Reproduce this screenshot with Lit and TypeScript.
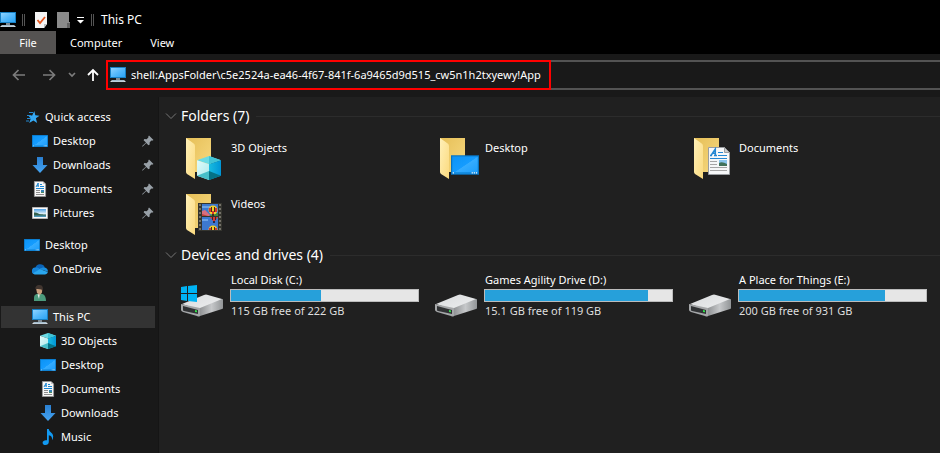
import { LitElement, html, css, nothing, TemplateResult } from "lit";
import { customElement, property } from "lit/decorators.js";
import { classMap } from "lit/directives/class-map.js";

const pc = () => html`<svg width="16" height="16" viewBox="0 0 16 16" aria-hidden="true">
  <defs><linearGradient id="pc" x1="0" y1="0" x2="1" y2="1"><stop offset="0" stop-color="#8fd3ff"/><stop offset=".5" stop-color="#55b9fb"/><stop offset="1" stop-color="#2ba4f5"/></linearGradient></defs>
  <path fill="#1780c4" d="M0 0h16v11H0z"/><path fill="url(#pc)" d="M1 1h14v9H1z"/>
  <path fill="#7f8b94" d="M6 11h4v2H6z"/><path fill="#d5dde3" d="M2 13h12l2 2H0z"/><path fill="#6e99b5" d="M2 13.500h12v.7H2z"/></svg>`;

const desktop = (w = 16, h = 16) => html`<svg width=${w} height=${h} viewBox="0 0 16 16" preserveAspectRatio="none" aria-hidden="true">
  <defs><linearGradient id="dk" x1="0" y1="0" x2="1" y2="1"><stop offset="0" stop-color="#0c93f5"/><stop offset=".5" stop-color="#159cff"/><stop offset=".52" stop-color="#35acff"/><stop offset="1" stop-color="#1b9dfc"/></linearGradient></defs>
  <path fill="#0873c0" d="M0 2h16v12H0z"/><path fill="url(#dk)" d="M.7 2.700h14.600v10.600H.7z"/><path fill="#0d83d6" d="M1 12.500h14v.8H1z"/><path fill="#fff" d="M1 12.500h.7v.8H1zM11.800 12.500h.7v.8h-.7zM13 12.500h.7v.8h-.7zM14.200 12.500h.7v.8h-.7z"/></svg>`;

const downloads = () => html`<svg width="16" height="16" viewBox="0 0 16 16" aria-hidden="true">
  <defs><linearGradient id="dl" x1="0" y1="0" x2="0" y2="1"><stop offset="0" stop-color="#2a7fd0"/><stop offset="1" stop-color="#45a4f2"/></linearGradient></defs>
  <path fill="url(#dl)" d="M5 0h6v8h4.500L8 16 .5 8H5z"/></svg>`;

const doc = () => html`<svg width="16" height="16" viewBox="0 0 16 16" aria-hidden="true">
  <path fill="#f7f7f7" stroke="#999" stroke-width=".8" d="M2.400.4h8.600l2.600 2.600v12.600H2.400z"/><path fill="#c5c5c5" d="M11 .4V3h2.600z"/>
  <path fill="none" stroke="#1b86d2" stroke-width="1" d="M4 6l2.200-4v4M4.800 4.800h1.800M8 3.500h2M8 5.500h4M4 7.500h8"/>
  <path stroke="#8c8c8c" d="M4 9.500h4M4 11.500h4M4 13.500h8"/><path fill="#3583b5" d="M9 9h3v3H9z"/><path fill="#4d8b63" d="M9 11h3v1H9z"/></svg>`;

const pictures = () => html`<svg width="16" height="16" viewBox="0 0 16 16" aria-hidden="true">
  <defs><linearGradient id="pi" x1="0" y1="0" x2="0" y2="1"><stop offset="0" stop-color="#4fa2e6"/><stop offset=".6" stop-color="#e2f1f8"/><stop offset="1" stop-color="#8cc0d8"/></linearGradient></defs>
  <path fill="#fafafa" stroke="#b5b5b5" d="M.5 2.500h15v11H.5z"/><path fill="url(#pi)" d="M2 4h12v8H2z"/><path fill="#35624e" d="M2 7.500c3-.5 4 1.500 7 1.800 2 .2 3 .2 5 .2V11H2z"/><path fill="#4c96b8" d="M2 10.500h12V12H2z"/></svg>`;

const star = () => html`<svg width="16" height="16" viewBox="0 0 16 16" aria-hidden="true">
  <path fill="#35a9f4" d="M10.300 2l1 4.300 4.200.4-3.600 2.500 1.200 4.800-3.700-2.600L5.200 14l1.600-4.500-2.600-3 4 .1z"/>
  <path stroke="#2389d2" d="M5 3.500h4M3 6.500h4M3 9.500h4M2 12h3"/></svg>`;

const cloud = () => html`<svg width="16" height="16" viewBox="0 0 16 16" aria-hidden="true">
  <path fill="#0b64b8" d="M3.300 7A5 5 0 0 1 12.800 6.500L7 11z"/><path fill="#1684d8" d="M3.400 6.600c1.500-.2 2.800.3 4.400 1.400L2 13a3.300 3.300 0 0 1 1.400-6.400z"/><path fill="#1a8fdf" d="M12.600 6.600a3.500 3.500 0 0 1 3.200 4.200L7.600 8c1.500-.8 2.800-1.500 5-1.400z"/>
  <path fill="#2aa7ef" d="M1 12.200l6.800-4.300 8 3.200c-.3 1.600-1.500 2.400-3 2.400H3.500c-1 0-1.900-.5-2.500-1.300z"/></svg>`;

const person = () => html`<svg width="16" height="16" viewBox="0 0 16 16" aria-hidden="true">
  <path fill="#4b9a7c" d="M2 16v-3.500C2 10 4 9 6 8.800h3c3 .2 4.800 2 5 7.200z"/><path fill="#e6eee9" d="M5.500 9.500L7 14l.8-5z"/><path fill="#c99f7d" d="M4 3h6v4.500L8 10 5 8z"/><path fill="#40352f" d="M3.500 4C3 1.500 5 0 7.500 0 11 0 11.500 3 10.500 7l-1-2.500C7 4 5.500 3.500 4 4.300z"/></svg>`;

const cube = (s = 16) => html`<svg width=${s} height=${s} viewBox="0 0 16 16" aria-hidden="true">
  <defs><linearGradient id="cl" x1="0" y1="0" x2="1" y2="1"><stop offset="0" stop-color="#e1fbfa"/><stop offset="1" stop-color="#a9e9ec"/></linearGradient><linearGradient id="cr" x1="0" y1="0" x2="1" y2="0"><stop offset="0" stop-color="#19bcdf"/><stop offset="1" stop-color="#0095d6"/></linearGradient></defs>
  <path fill="#6adbe5" d="M8 0l8 2.800L8 5.500 0 2.800z"/><path fill="#40c3d5" d="M8 0l8 2.800L8 5.500z"/><path fill="url(#cl)" d="M0 2.800l8 2.700V16l-8-2.800z"/><path fill="url(#cr)" d="M16 2.800L8 5.500V16l8-2.800z"/><path fill="#47bfc9" d="M0 13.200L8 10v6z"/><path fill="#057286" d="M8 10l8 3.200L8 16z"/></svg>`;

const music = () => html`<svg width="16" height="16" viewBox="0 0 16 16" aria-hidden="true">
  <path fill="#129af2" d="M7 0h1.800c.2 3 4.400 3.500 4.400 7.500 0 1.500-.4 2.700-1.200 3.700.5-3-.8-4.400-3.200-4.900V13c0 1.800-1.500 3-3.300 3C3.900 16 2.600 15.200 2.600 13.700c0-1.800 2.200-3 4.400-2.400z"/></svg>`;

const pin = () => html`<svg class="pin" width="12" height="12" viewBox="0 0 12 12" aria-hidden="true">
  <path fill="#98a0a7" d="M7 .5L11.500 5l-1.400.7-.8-.1-1.700 1.800.1 2.200-1.200.7-2.300-2.400L.8 11.500H.2v-.6L4 7.500 1.600 5.200l.8-1.100 2.200.1 1.800-1.700-.1-1z"/></svg>`;

const folder = (over: TemplateResult, kind: string) => html`<span class="folder">
  <svg width="42" height="42" viewBox="0 0 42 42" aria-hidden="true">
    <defs><linearGradient id="fb" x1="0" y1="0" x2="1" y2="1"><stop offset="0" stop-color="#e6bf57"/><stop offset="1" stop-color="#f7d981"/></linearGradient><linearGradient id="ff" x1="0" y1="0" x2="1" y2="1"><stop offset="0" stop-color="#fff0b8"/><stop offset="1" stop-color="#fbda7e"/></linearGradient></defs>
    <path fill="url(#fb)" d="M0 0h25v34H0z"/><path fill="url(#ff)" d="M0 0l7 5q2 1 2 3v33l-8-5q-1-1-1-2z"/></svg>
  <span class=${"over " + kind}>${over}</span></span>`;

const page = () => html`<svg width="22" height="28" viewBox="0 0 22 28" aria-hidden="true">
  <path fill="#f6f7f8" stroke="#9a9da0" d="M.5.5h16l5 5v22H.5z"/><path fill="#c9ccce" stroke="#9a9da0" d="M16.500.5v5h5z"/>
  <path fill="none" stroke="#2387d2" stroke-width="1.500" d="M3 8.500L7.300 2v6.500M4.600 6.300h3M2 8.500h2M6 8.500h3"/>
  <path stroke="#2387d2" d="M10 5.500h5M10 8.500h9M2 11.500h17"/><path stroke="#a5a5a5" d="M2 14.500h7M2 17.500h7M2 20.500h17M2 23.500h17"/><path fill="#8ac5ed" d="M11 13h8v6h-8z"/><path fill="#41725a" d="M11 16q3-2 8 1v2h-8z"/></svg>`;

const film = () => html`<svg width="24" height="28" viewBox="0 0 24 28" aria-hidden="true">
  <defs><clipPath id="f1"><path d="M4 1h16v12H4z"/></clipPath><clipPath id="f2"><path d="M4 14h16v13H4z"/></clipPath></defs>
  <path fill="#35352f" d="M0 0h24v28H0z"/><path fill="#3d78cf" d="M4 1h16v12H4zM4 14h16v13H4z"/><path fill="#6ba2e6" d="M4 3h8v2H4zM4 16h6v2H4z"/>
  <path fill="#d96f80" d="M4 8l3-1 5 5v1H4z"/><path fill="#be4136" d="M4 11l6 2H4z"/><path fill="#3d8540" d="M11 13l3-2 6-1v3z"/>
  <g clip-path="url(#f1)"><circle cx="15" cy="7" r="4.500" fill="#f4d02c"/><path fill="#d93a2b" d="M11 5h2v4h-2zM17 5h2v4h-2zM14 8h2v3h-2z"/><path fill="#3b3020" d="M13 4h1v5h-1zM16 4h1v5h-1zM14 11h2v2h-2z"/></g>
  <g clip-path="url(#f2)"><path fill="#d93a2b" d="M12 14h8l-3 4h-2z"/><path fill="#2d2740" d="M14 14h1v3h-1zM17 14h1v3h-1zM15 18h2v2h-2z"/><circle cx="15" cy="27" r="4.500" fill="#f4d02c"/><path fill="#d93a2b" d="M11 25h2v3h-2zM17 25h2v3h-2z"/><path fill="#3b3020" d="M13 24h1v4h-1zM16 24h1v4h-1z"/></g>
  <path stroke="#8b877e" stroke-width="1.500" stroke-dasharray="2 2" d="M2 1v26M22 1v26"/></svg>`;

const drive = (win: boolean) => html`<svg class="drive" width="44" height="34" viewBox="0 0 44 34" aria-hidden="true">
  <defs><linearGradient id="dt" x1="0" y1="0" x2="1" y2="1"><stop offset="0" stop-color="#d9dbdd"/><stop offset="1" stop-color="#eeeff0"/></linearGradient><linearGradient id="ds" x1="0" y1="0" x2="1" y2="0"><stop offset="0" stop-color="#919395"/><stop offset=".5" stop-color="#c6c8ca"/><stop offset="1" stop-color="#929597"/></linearGradient></defs>
  <path fill="url(#dt)" d="M2 20L24 11q2-1 4 0l14 4q1 1 0 2L20 26z"/><path fill="url(#ds)" d="M20 24l22-9q1 0 1 1v8q0 1-1 1l-22 7z"/>
  <path fill="#a5a7a9" d="M1 20l19 4v8q-1 1-3 0L3 28q-2-1-2-2z"/><path fill="#303234" d="M3 22l15 4v4L4 27q-1 0-1-1z"/><path fill="#31e14a" d="M15 26l2 .5v1.800l-2-.4z"/>
  ${win ? html`<svg viewBox="0 0 44 34" width="44" height="34"><path fill="#00b3f4" d="M1 3l6-1v7H1zM8 2l9-1v8H8zM1 10h6v7l-6-1zM8 10h9v8l-9-1z"/></svg>` : nothing}</svg>`;

const chevron = () => html`<svg class="chevron" width="12" height="12" viewBox="0 0 12 12" aria-hidden="true"><path fill="none" stroke="#777" d="M1 3.500l5 5 5-5"/></svg>`;

interface TreeNode { icon: TemplateResult; text: string; level: number; pinned?: boolean; selected?: boolean }

const quick: TreeNode[] = [
  { icon: star(), text: "Quick access", level: 0 },
  { icon: desktop(), text: "Desktop", level: 1, pinned: true },
  { icon: downloads(), text: "Downloads", level: 1, pinned: true },
  { icon: doc(), text: "Documents", level: 1, pinned: true },
  { icon: pictures(), text: "Pictures", level: 1, pinned: true },
];
const tree: TreeNode[] = [
  { icon: desktop(), text: "Desktop", level: 0 },
  { icon: cloud(), text: "OneDrive", level: 1 },
  { icon: person(), text: "", level: 1 },
  { icon: pc(), text: "This PC", level: 1, selected: true },
  { icon: cube(), text: "3D Objects", level: 2 },
  { icon: desktop(), text: "Desktop", level: 2 },
  { icon: doc(), text: "Documents", level: 2 },
  { icon: downloads(), text: "Downloads", level: 2 },
  { icon: music(), text: "Music", level: 2 },
];
const folders = [
  { name: "3D Objects", icon: folder(cube(24), "cube") },
  { name: "Desktop", icon: folder(desktop(28, 26), "desk") },
  { name: "Documents", icon: folder(page(), "page") },
  { name: "Videos", icon: folder(film(), "film") },
];
const drives = [
  { name: "Local Disk (C:)", note: "115 GB free of 222 GB", used: 48, win: true },
  { name: "Games Agility Drive (D:)", note: "15.1 GB free of 119 GB", used: 87, win: false },
  { name: "A Place for Things (E:)", note: "200 GB free of 931 GB", used: 78, win: false },
];

const base = css`
  * { box-sizing: border-box; }
  button { font: inherit; color: inherit; background: none; border: 0; padding: 0; margin: 0; }
  svg { display: block; flex: none; }
  ul { list-style: none; margin: 0; padding: 0; }
`;

@customElement("nav-tree")
class NavTree extends LitElement {
  @property({ attribute: false }) nodes: TreeNode[] = [];
  static styles = [base, css`
    :host { display: block; }
    .list { display: grid; gap: 2px; padding: 1px 3px 1px 1px; }
    .row { display: flex; align-items: center; height: 22px; padding: 0 1px 0 23px; gap: 5px; color: #fff; text-decoration: none; white-space: nowrap; }
    .l1 { padding-left: 31px; }
    .l2 { padding-left: 39px; }
    .selected { background: #333; }
    .pin { margin-left: auto; }
  `];
  render() {
    return html`<ul class="list">${this.nodes.map(n => html`<li><a href="#" aria-label=${n.text || "User"} class=${classMap({ row: true, l1: n.level === 1, l2: n.level === 2, selected: !!n.selected })}>
      ${n.icon}<span>${n.text}</span>${n.pinned ? pin() : nothing}</a></li>`)}</ul>`;
  }
}

@customElement("drive-tile")
class DriveTile extends LitElement {
  @property() name = "";
  @property() note = "";
  @property({ type: Number }) used = 0;
  @property({ type: Boolean }) win = false;
  static styles = [base, css`
    :host { display: flex; gap: 6px; padding-left: 3px; }
    .drive { margin-top: 12px; }
    .info { width: 189px; line-height: 16px; }
    .text { display: block; padding-left: 1px; white-space: nowrap; }
    .note { color: #dedede; }
    .bar { height: 13px; margin: 1px 0; border: 1px solid #bcbcbc; background: #e6e6e6; }
    .fill { height: 100%; background: #26a0da; }
  `];
  render() {
    return html`${drive(this.win)}<div class="info"><span class="text">${this.name}</span>
      <div class="bar" role="meter" aria-label=${this.name} aria-valuemin="0" aria-valuemax="100" aria-valuenow=${this.used}><div class="fill" style="width:${this.used}%"></div></div>
      <span class="text note">${this.note}</span></div>`;
  }
}

@customElement("app-root")
class AppRoot extends LitElement {
  static styles = [base, css`
    :host { display: flex; flex-direction: column; min-height: 100vh; overflow: hidden; background: #191919; color: #fff; font: 11px/16px "Noto Sans", "Open Sans", sans-serif; }
    .title { display: flex; align-items: center; height: 31px; padding-top: 9px; background: #000; }
    .sep { width: 3px; height: 12px; margin: 0 7px 0 6px; border: 1px solid #555; border-width: 0 1px; }
    .tool { margin: 0 3px; }
    .caption { font: 12px/16px "Noto Sans", "Open Sans", sans-serif; margin: 0; }
    .tabs { display: flex; height: 23px; background: #000; }
    .tab { padding: 0 14px; }
    .file { width: 56px; background: #555352; }
    .bar { display: flex; align-items: center; height: 43px; padding: 0 0 1px 12px; }
    .nav { flex: none; }
    .fwd { margin-left: 16px; }
    .recent { margin-left: 12px; }
    .up { margin: 0 7px 0 11px; }
    .address { position: relative; display: flex; flex: 1; align-items: center; gap: 5px; height: 30px; padding-left: 2px; border: 2px solid #535353; border-right: 0; }
    .path { flex: 1; min-width: 0; padding: 0; border: 0; outline: 0; background: none; color: #fff; font: inherit; }
    .mark { position: absolute; left: -2px; top: -2px; width: 445px; height: 30px; border: 2px solid #f00; pointer-events: none; }
    .body { display: flex; flex: 1; }
    .side { flex: none; width: 158px; padding: 8px 0 4px; }
    .second { margin-top: 8px; }
    .main { flex: 1; min-width: 0; padding: 8px 0 0 6px; background: #202020; border-left: 1px solid #151515; }
    .head { display: flex; align-items: center; height: 22px; margin: 0; gap: 4px; font: 14px/22px "Noto Sans", "Open Sans", sans-serif; }
    .head::after { content: ""; flex: 1; height: 1px; margin-left: 3px; background: #2c2c2c; }
    .grid { display: grid; grid-template-columns: repeat(auto-fill, 254px); padding-left: 12px; }
    .folders { row-gap: 14px; padding-top: 11px; }
    .drives { padding-top: 6px; }
    .item { display: flex; gap: 4px; padding-left: 9px; text-align: left; align-items: flex-start; }
    .name { padding-top: 2px; }
    .folder { position: relative; display: block; width: 41px; height: 42px; }
    .over { position: absolute; }
    .cube { left: 11px; top: 18px; }
    .desk { left: 11px; top: 14px; }
    .page { left: 14px; top: 9px; }
    .film { left: 12px; top: 9px; }
    .devices { margin-top: 8px; }
  `];
  render() {
    return html`
      <header class="title">${pc()}<span class="sep"></span>
        <button class="tool" aria-label="Properties"><svg width="12" height="16" viewBox="0 0 12 16"><path fill="#f4f4f4" d="M0 0h12v12l-3 4H0z"/><path fill="#bcbcbc" d="M9 12h3l-3 4z"/><path fill="none" stroke="#e8571d" stroke-width="1.800" d="M2.500 8l2.500 3 5-6"/></svg></button>
        <button class="tool" aria-label="New folder"><svg width="20" height="16" viewBox="0 0 20 16"><path fill="#8b8b8b" d="M4 0h12v10h1v6H4z"/><path fill="#626262" d="M14 11h3v5h-3z"/></svg></button>
        <button aria-label="Customize toolbar"><svg width="9" height="8" viewBox="0 0 9 8"><path fill="#fff" d="M1 1h7v1H1zM1 4h7L4.500 7.500z"/></svg></button>
        <span class="sep"></span><h1 class="caption">This PC</h1></header>
      <nav class="tabs"><button class="tab file">File</button><button class="tab">Computer</button><button class="tab">View</button></nav>
      <div class="bar">
        <button class="nav" aria-label="Back"><svg width="14" height="12" viewBox="0 0 14 12"><path fill="none" stroke="#7c7c7c" stroke-width="1.700" d="M13 6H1.500M6.500 1l-5 5 5 5"/></svg></button>
        <button class="nav fwd" aria-label="Forward"><svg width="14" height="12" viewBox="0 0 14 12"><path fill="none" stroke="#7c7c7c" stroke-width="1.700" d="M1 6h11.500M7.500 1l5 5-5 5"/></svg></button>
        <button class="nav recent" aria-label="Recent locations"><svg width="8" height="6" viewBox="0 0 8 6"><path fill="none" stroke="#7c7c7c" stroke-width="1.700" d="M1 1l3 3 3-3"/></svg></button>
        <button class="nav up" aria-label="Up"><svg width="12" height="14" viewBox="0 0 12 14"><path fill="none" stroke="#fff" stroke-width="1.800" d="M6 13V2M1 7l5-5 5 5"/></svg></button>
        <div class="address">${pc()}<input class="path" aria-label="Address" spellcheck="false" value="shell:AppsFolder\\c5e2524a-ea46-4f67-841f-6a9465d9d515_cw5n1h2txyewy!App"><span class="mark"></span></div>
      </div>
      <div class="body">
        <aside class="side"><nav-tree .nodes=${quick}></nav-tree><nav-tree class="second" .nodes=${tree}></nav-tree></aside>
        <main class="main">
          <section><h2 class="head">${chevron()}Folders (7)</h2>
            <div class="grid folders">${folders.map(f => html`<button class="item">${f.icon}<span class="name">${f.name}</span></button>`)}</div></section>
          <section class="devices"><h2 class="head">${chevron()}Devices and drives (4)</h2>
            <div class="grid drives">${drives.map(d => html`<drive-tile .name=${d.name} .note=${d.note} .used=${d.used} .win=${d.win}></drive-tile>`)}</div></section>
        </main>
      </div>`;
  }
}
